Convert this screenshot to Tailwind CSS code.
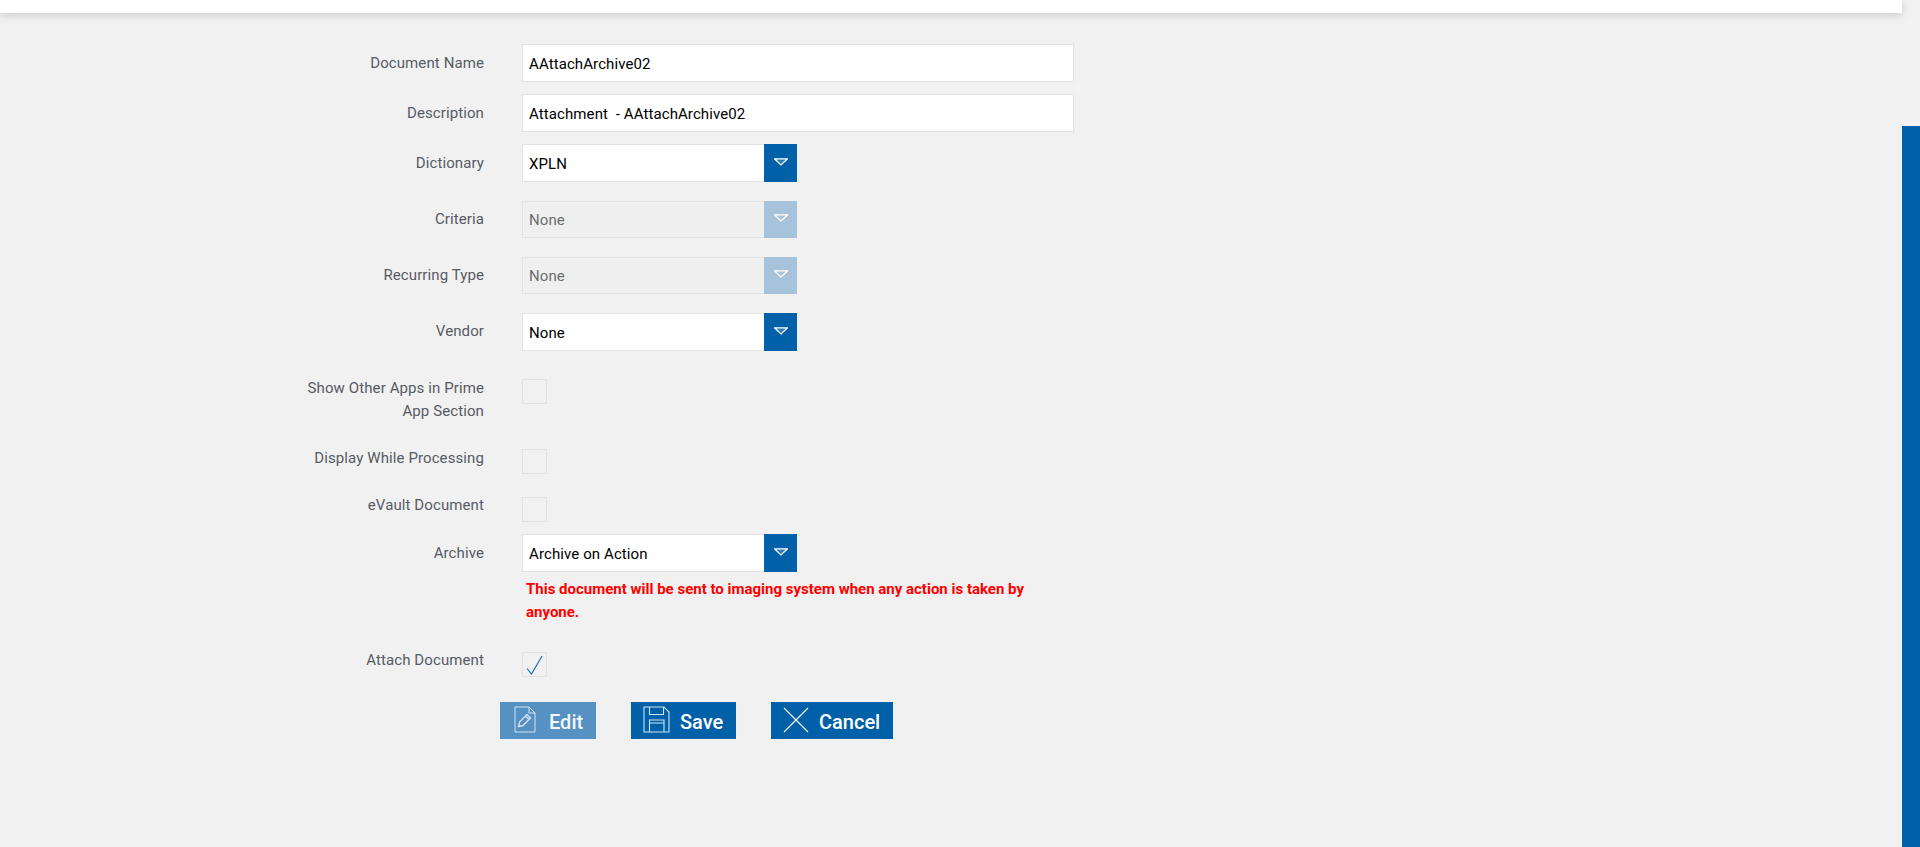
<!DOCTYPE html>
<html lang="en">
<head>
<meta charset="UTF-8">
<title>Document</title>
<script src="https://cdn.jsdelivr.net/npm/@tailwindcss/browser@4"></script>
</head>
<body class="bg-[#f1f1f1] font-['Roboto',sans-serif] text-[15px] tracking-[0.1px] h-[847px] overflow-hidden">
<div class="flex h-[847px]">
  <main class="flex-1 min-w-0">
    <header class="h-[13px] bg-white shadow-[0_2px_8px_rgba(0,0,0,0.16)]"></header>

    <form class="pl-[284px] pt-[31px]">
      <!-- text inputs -->
      <div class="flex">
        <label class="w-[200px] pt-[8px] leading-[23px] text-right text-[#565b65]">Document Name</label>
        <input class="ml-[38px] w-[552px] h-[38px] px-[6px] pt-px bg-white border border-[#e2e2e2] text-black outline-none" value="AAttachArchive02">
      </div>
      <div class="flex mt-[12px]">
        <label class="w-[200px] pt-[8px] leading-[23px] text-right text-[#565b65]">Description</label>
        <input class="ml-[38px] w-[552px] h-[38px] px-[6px] pt-px bg-white border border-[#e2e2e2] text-black outline-none whitespace-pre" value="Attachment  - AAttachArchive02">
      </div>

      <!-- dropdowns -->
      <div class="flex mt-[12px]">
        <label class="w-[200px] pt-[8px] leading-[23px] text-right text-[#565b65]">Dictionary</label>
        <div class="ml-[38px] w-[275px] h-[38px] flex bg-white border border-[#e2e2e2] border-r-0">
          <span class="flex-1 px-[6px] leading-[38px] text-black">XPLN</span>
          <span class="w-[33px] -my-px flex items-center justify-center bg-[#0060a8]">
            <svg width="14" height="8" viewBox="0 0 14 8" fill="none" stroke="#fff" stroke-width="1.2" class="-mt-[3px]"><path d="M0.5 0.8H13.5L7 7Z" fill="#a7c9e4" fill-opacity="0.25"/></svg>
          </span>
        </div>
      </div>
      <div class="flex mt-[19px]">
        <label class="w-[200px] pt-[7px] leading-[23px] text-right text-[#565b65]">Criteria</label>
        <div class="ml-[38px] w-[275px] h-[37px] flex bg-[#efefef] border border-[#e2e2e2] border-r-0">
          <span class="flex-1 px-[6px] leading-[37px] text-[#6d6d6d]">None</span>
          <span class="w-[33px] -my-px flex items-center justify-center bg-[#a7c3db]">
            <svg width="14" height="8" viewBox="0 0 14 8" fill="none" stroke="#fff" stroke-width="1.2" class="-mt-[3px]"><path d="M0.5 0.8H13.5L7 7Z"/></svg>
          </span>
        </div>
      </div>
      <div class="flex mt-[19px]">
        <label class="w-[200px] pt-[7px] leading-[23px] text-right text-[#565b65]">Recurring Type</label>
        <div class="ml-[38px] w-[275px] h-[37px] flex bg-[#efefef] border border-[#e2e2e2] border-r-0">
          <span class="flex-1 px-[6px] leading-[37px] text-[#6d6d6d]">None</span>
          <span class="w-[33px] -my-px flex items-center justify-center bg-[#a7c3db]">
            <svg width="14" height="8" viewBox="0 0 14 8" fill="none" stroke="#fff" stroke-width="1.2" class="-mt-[3px]"><path d="M0.5 0.8H13.5L7 7Z"/></svg>
          </span>
        </div>
      </div>
      <div class="flex mt-[19px]">
        <label class="w-[200px] pt-[7px] leading-[23px] text-right text-[#565b65]">Vendor</label>
        <div class="ml-[38px] w-[275px] h-[38px] flex bg-white border border-[#e2e2e2] border-r-0">
          <span class="flex-1 px-[6px] leading-[38px] text-black">None</span>
          <span class="w-[33px] -my-px flex items-center justify-center bg-[#0060a8]">
            <svg width="14" height="8" viewBox="0 0 14 8" fill="none" stroke="#fff" stroke-width="1.2" class="-mt-[3px]"><path d="M0.5 0.8H13.5L7 7Z" fill="#a7c9e4" fill-opacity="0.25"/></svg>
          </span>
        </div>
      </div>

      <!-- checkboxes -->
      <div class="flex mt-[25px] h-[70px]">
        <label class="w-[200px] pt-px leading-[23px] text-right text-[#565b65]">Show Other Apps in Prime App Section</label>
        <span class="ml-[38px] mt-[3px] w-[25px] h-[25px] border border-[#e2e2e2]"></span>
      </div>
      <div class="flex h-[47px]">
        <label class="w-[200px] pt-px leading-[23px] text-right text-[#565b65]">Display While Processing</label>
        <span class="ml-[38px] mt-[3px] w-[25px] h-[25px] border border-[#e2e2e2]"></span>
      </div>
      <div class="flex h-[41px]">
        <label class="w-[200px] pt-px leading-[23px] text-right text-[#565b65]">eVault Document</label>
        <span class="ml-[38px] mt-[4px] w-[25px] h-[25px] border border-[#e2e2e2]"></span>
      </div>

      <div class="flex">
        <label class="w-[200px] pt-[8px] leading-[23px] text-right text-[#565b65]">Archive</label>
        <div class="ml-[38px]">
          <div class="w-[275px] h-[38px] flex bg-white border border-[#e2e2e2] border-r-0">
            <span class="flex-1 px-[6px] leading-[38px] text-black">Archive on Action</span>
            <span class="w-[33px] -my-px flex items-center justify-center bg-[#0060a8]">
              <svg width="14" height="8" viewBox="0 0 14 8" fill="none" stroke="#fff" stroke-width="1.2" class="-mt-[3px]"><path d="M0.5 0.8H13.5L7 7Z" fill="#a7c9e4" fill-opacity="0.25"/></svg>
            </span>
          </div>
          <p class="mt-[6px] ml-[4px] w-[515px] leading-[23px] font-bold tracking-normal text-[#ff0000]">This document will be sent to imaging system when any action is taken by anyone.</p>
        </div>
      </div>

      <div class="flex mt-[24px]">
        <label class="w-[200px] pt-px leading-[23px] text-right text-[#565b65]">Attach Document</label>
        <span class="ml-[38px] mt-[4px] w-[25px] h-[25px] flex items-center justify-center border border-[#e2e2e2]">
          <svg width="17" height="21" viewBox="0 0 17 21" fill="none" stroke="#0a6ab4" stroke-width="1.1"><path d="M1 14.5L5.5 20L16 2"/></svg>
        </span>
      </div>

      <!-- buttons -->
      <div class="flex ml-[216px] mt-[25px]">
        <button type="button" class="w-[96px] h-[37px] flex items-center pl-[14px] bg-[#5592c3] text-[#f2f7fb] text-[20px] font-medium tracking-normal">
          <svg width="22" height="27" viewBox="0 0 22 27" fill="none" stroke="#d3e3f0" stroke-width="1" class="-mt-[2px] shrink-0"><path d="M1 1H15L21 7V26H1ZM15 1V7H21"/><path d="M4.500 20.500L5.500 16L13 8.500L16.500 12L9 19.500ZM11.500 10L15 13.500" stroke-width="1.4"/></svg>
          <span class="ml-[13px] mt-[3px]">Edit</span>
        </button>
        <button type="button" class="ml-[35px] w-[105px] h-[37px] flex items-center pl-[12px] bg-[#0060a8] text-white text-[20px] font-medium tracking-normal">
          <svg width="27" height="27" viewBox="0 0 27 27" fill="none" stroke="#cfe2f1" stroke-width="1.1" class="-mt-[2px] shrink-0"><path d="M1 1H21L26 6V26H1Z"/><path d="M6.500 1V8.500H20.500V1M6.500 26V14H21V26M6.500 17H21"/></svg>
          <span class="ml-[10px] mt-[3px]">Save</span>
        </button>
        <button type="button" class="ml-[35px] w-[122px] h-[37px] flex items-center pl-[12px] bg-[#0060a8] text-white text-[20px] font-medium tracking-normal">
          <svg width="26" height="26" viewBox="0 0 26 26" fill="none" stroke="#fff" stroke-width="1.1" class="-mt-[2px] shrink-0"><path d="M1 1L25 25M25 1L1 25"/></svg>
          <span class="ml-[10px] mt-[3px]">Cancel</span>
        </button>
      </div>
    </form>
  </main>

  <aside class="w-[18px] pt-[126px]">
    <div class="h-full bg-[#0060a8]"></div>
  </aside>
</div>
</body>
</html>
